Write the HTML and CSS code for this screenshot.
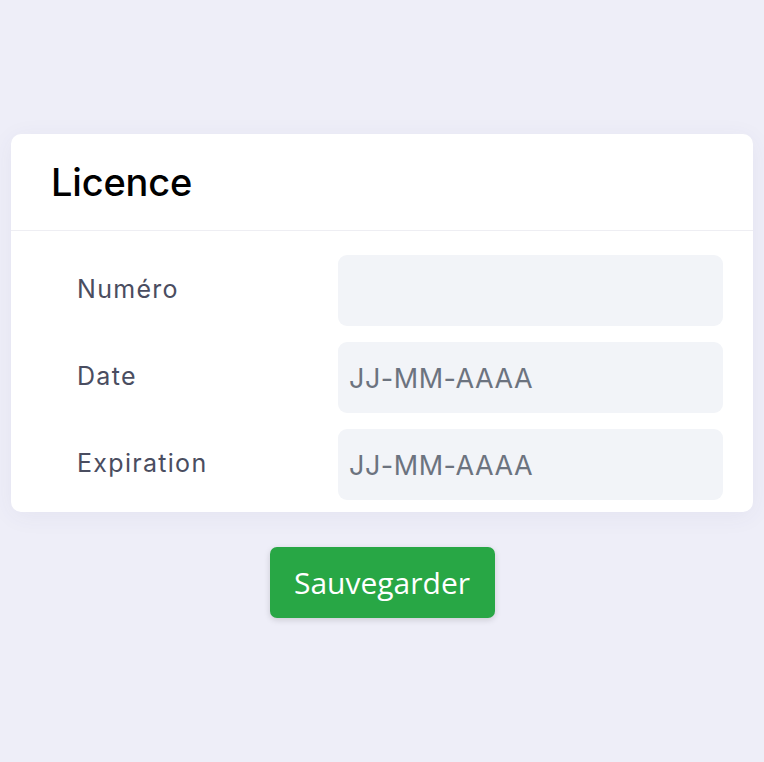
FILE: index.html
```html
<!DOCTYPE html>
<html lang="fr">
<head>
<meta charset="utf-8">
<title>Licence</title>
<link rel="stylesheet" href="styles.css">
</head>
<body>
<main class="page">
  <section class="card">
    <header class="card-header">
      <h1 class="card-title">Licence</h1>
    </header>
    <div class="card-body">
      <div class="form-row">
        <label class="form-label" for="num">Numéro</label>
        <input class="form-input" id="num" type="text">
      </div>
      <div class="form-row">
        <label class="form-label" for="date">Date</label>
        <input class="form-input" id="date" type="text" placeholder="JJ-MM-AAAA">
      </div>
      <div class="form-row">
        <label class="form-label" for="exp">Expiration</label>
        <input class="form-input" id="exp" type="text" placeholder="JJ-MM-AAAA">
      </div>
    </div>
  </section>
  <div class="actions">
    <button class="btn-save" type="button">Sauvegarder</button>
  </div>
</main>
</body>
</html>
```
FILE: styles.css
```css
html, body {
  margin: 0;
  padding: 0;
}
body {
  background: #eeeef8;
  min-height: 762px;
}
.page {
  padding: 134px 11px 0 11px;
}
.card {
  background: #ffffff;
  border-radius: 10px;
  box-shadow: 0 4px 24px rgba(60, 64, 120, 0.06);
}
.card-header {
  height: 96px;
  border-bottom: 1px solid #eeeef3;
  display: flex;
  align-items: center;
  padding-left: 40px;
}
.card-title {
  margin: 0;
  font-family: Inter, "Noto Sans", sans-serif;
  font-weight: 500;
  font-size: 38px;
  color: #000;
  letter-spacing: -0.2px;
}
.card-body {
  padding: 24px 30px 12px 66px;
  display: flex;
  flex-direction: column;
  gap: 16px;
}
.form-row {
  display: grid;
  grid-template-columns: 261px minmax(0, 1fr);
  align-items: center;
}
.form-label {
  font-family: Inter, "Noto Sans", sans-serif;
  font-size: 25px;
  letter-spacing: 1.3px;
  color: #4a4d60;
  padding-bottom: 4px;
}
.form-input {
  width: 100%;
  min-width: 0;
  height: 71px;
  box-sizing: border-box;
  border: none;
  border-radius: 9px;
  background: #f2f4f8;
  padding: 2px 11px 0;
  font-family: Inter, "Noto Sans", sans-serif;
  font-size: 27px;
  letter-spacing: 0.5px;
  color: #333;
  outline: none;
}
.form-input::placeholder {
  color: #6c737f;
}
.actions {
  display: flex;
  justify-content: center;
  padding-top: 35px;
}
.btn-save {
  width: 225px;
  height: 71px;
  border: none;
  border-radius: 7px;
  background: #28a745;
  color: #ffffff;
  font-family: "Open Sans", "Noto Sans", sans-serif;
  font-size: 30px;
  box-shadow: 0 2px 6px rgba(0, 0, 0, 0.15);
  padding: 0;
}
```
